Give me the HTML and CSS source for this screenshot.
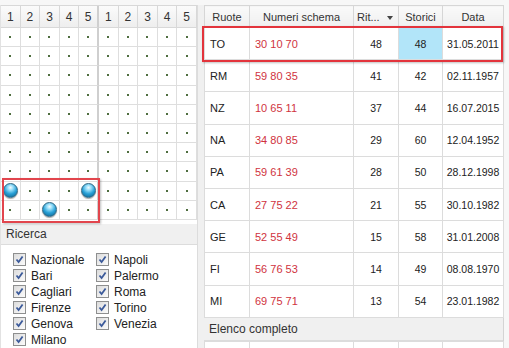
FILE: index.html
```html
<!DOCTYPE html>
<html lang="it">
<head>
    <meta charset="UTF-8">
    <title>Schemi ritardatari</title>
    <link rel="stylesheet" href="styles.css">
</head>
<body>

<div class="app">
    <!-- pannello sinistro: schedina + ricerca -->
    <div class="left">
        <div class="board" id="board"></div>
        <div class="pick-box"></div>

        <div class="bar">Ricerca</div>
        <div class="checks">
            <label class="chk"><span class="cb"><svg viewBox="0 0 9 9"><path d="M1.5 4.5 L3.6 7 L7.6 1.5"/></svg></span>Nazionale</label>
            <label class="chk"><span class="cb"><svg viewBox="0 0 9 9"><path d="M1.5 4.5 L3.6 7 L7.6 1.5"/></svg></span>Napoli</label>
            <label class="chk"><span class="cb"><svg viewBox="0 0 9 9"><path d="M1.5 4.5 L3.6 7 L7.6 1.5"/></svg></span>Bari</label>
            <label class="chk"><span class="cb"><svg viewBox="0 0 9 9"><path d="M1.5 4.5 L3.6 7 L7.6 1.5"/></svg></span>Palermo</label>
            <label class="chk"><span class="cb"><svg viewBox="0 0 9 9"><path d="M1.5 4.5 L3.6 7 L7.6 1.5"/></svg></span>Cagliari</label>
            <label class="chk"><span class="cb"><svg viewBox="0 0 9 9"><path d="M1.5 4.5 L3.6 7 L7.6 1.5"/></svg></span>Roma</label>
            <label class="chk"><span class="cb"><svg viewBox="0 0 9 9"><path d="M1.5 4.5 L3.6 7 L7.6 1.5"/></svg></span>Firenze</label>
            <label class="chk"><span class="cb"><svg viewBox="0 0 9 9"><path d="M1.5 4.5 L3.6 7 L7.6 1.5"/></svg></span>Torino</label>
            <label class="chk"><span class="cb"><svg viewBox="0 0 9 9"><path d="M1.5 4.5 L3.6 7 L7.6 1.5"/></svg></span>Genova</label>
            <label class="chk"><span class="cb"><svg viewBox="0 0 9 9"><path d="M1.5 4.5 L3.6 7 L7.6 1.5"/></svg></span>Venezia</label>
            <label class="chk"><span class="cb"><svg viewBox="0 0 9 9"><path d="M1.5 4.5 L3.6 7 L7.6 1.5"/></svg></span>Milano</label>
        </div>
    </div>

    <div class="splitter"></div>

    <!-- pannello destro: elenco schemi -->
    <div class="right">
        <table class="schemi">
            <colgroup>
                <col class="c-ruota"><col class="c-num"><col class="c-rit"><col class="c-sto"><col class="c-data">
            </colgroup>
            <thead>
                <tr>
                    <th>Ruote</th>
                    <th>Numeri schema</th>
                    <th class="sorted">Rit... <span class="arrow"></span></th>
                    <th>Storici</th>
                    <th>Data</th>
                </tr>
            </thead>
            <tbody id="rows"></tbody>
        </table>
        <div class="row-box"></div>

        <div class="bar">Elenco completo</div>
        <table class="schemi stub">
            <colgroup>
                <col class="c-ruota"><col class="c-num"><col class="c-rit"><col class="c-sto"><col class="c-data">
            </colgroup>
            <tr><td></td><td></td><td></td><td></td><td></td></tr>
        </table>
    </div>
</div>

<script>
// schedina 2 x (5 colonne), 10 righe
const board = document.getElementById('board');
const marbles = ['8-0', '8-4', '9-2'];

for (let c = 0; c < 10; c++) {
    const h = document.createElement('div');
    h.className = 'hd' + (c === 4 ? ' sep' : '');
    h.innerText = (c % 5) + 1;
    board.appendChild(h);
}
for (let r = 0; r < 10; r++) {
    for (let c = 0; c < 10; c++) {
        const cell = document.createElement('div');
        cell.className = 'cell' + (c === 4 ? ' sep' : '');
        const mark = document.createElement('span');
        mark.className = marbles.includes(r + '-' + c) ? 'marble' : 'dot';
        cell.appendChild(mark);
        board.appendChild(cell);
    }
}

// dati schemi
const data = [
    ['TO', '30 10 70', 48, 48, '31.05.2011'],
    ['RM', '59 80 35', 41, 42, '02.11.1957'],
    ['NZ', '10 65 11', 37, 44, '16.07.2015'],
    ['NA', '34 80 85', 29, 60, '12.04.1952'],
    ['PA', '59 61 39', 28, 50, '28.12.1998'],
    ['CA', '27 75 22', 21, 55, '30.10.1982'],
    ['GE', '52 55 49', 15, 58, '31.01.2008'],
    ['FI', '56 76 53', 14, 49, '08.08.1970'],
    ['MI', '69 75 71', 13, 54, '23.01.1982']
];
const tbody = document.getElementById('rows');
data.forEach(function(d, i) {
    const tr = document.createElement('tr');
    tr.innerHTML =
        '<td class="ruota">' + d[0] + '</td>' +
        '<td class="num">' + d[1] + '</td>' +
        '<td class="mid">' + d[2] + '</td>' +
        '<td class="mid' + (i === 0 ? ' hl' : '') + '">' + d[3] + '</td>' +
        '<td class="mid">' + d[4] + '</td>';
    tbody.appendChild(tr);
});
</script>

</body>
</html>
```

FILE: styles.css
```css
* {
    margin: 0;
    padding: 0;
    box-sizing: border-box;
}
body {
    font-family: "Liberation Sans", Arial, sans-serif;
    font-size: 11px;
    color: #222;
    background-color: #f7f7f7;
}
.app {
    display: flex;
    height: 348px;
    padding-top: 5px;
    overflow: hidden;
}

/* pannello sinistro */
.left {
    position: relative;
    width: 197px;
    display: flex;
    flex-direction: column;
    background-color: #fff;
    border-left: 1px solid #e2e2e2;
}
.board {
    display: grid;
    grid-template-columns: repeat(10, 1fr);
    grid-template-rows: 22px repeat(10, 19.2px);
    border-top: 1px solid #d8d8d8;
}
.hd {
    display: flex;
    align-items: center;
    justify-content: center;
    font-size: 12px;
    color: #333;
    background: linear-gradient(#fbfbfb, #eeeeee);
    border-right: 1px solid #d8d8d8;
    border-bottom: 1px solid #d8d8d8;
}
.cell {
    display: flex;
    align-items: center;
    justify-content: center;
    border-right: 1px solid #dedede;
    border-bottom: 1px solid #dedede;
}
.hd.sep, .cell.sep {
    border-right: 2px solid #cfcfcf;
}
.dot {
    width: 2px;
    height: 2px;
    background-color: #4f6e3f;
}
.marble {
    width: 15px;
    height: 15px;
    border-radius: 50%;
    border: 1px solid #2f6783;
    background: radial-gradient(circle at 50% 28%, #f2fbff 0, #9be0fa 22%, #28a0d6 55%, #0b5b86 100%);
    box-shadow: 0 1px 1px rgba(0, 0, 0, 0.35);
}
.pick-box {
    position: absolute;
    left: 1px;
    top: 173px;
    width: 98px;
    height: 45px;
    border: 2px solid #e2454d;
    box-shadow: 1px 1px 2px rgba(0, 0, 0, 0.25);
}

.bar {
    height: 21px;
    margin-top: 4px;
    padding-left: 5px;
    line-height: 20px;
    font-size: 12px;
    color: #333;
    background-color: #f0f0f0;
    border-bottom: 1px solid #dcdcdc;
}
.checks {
    display: grid;
    grid-template-columns: 83px 1fr;
    grid-auto-rows: 16px;
    padding: 7px 0 0 12px;
}
.chk {
    display: flex;
    align-items: center;
    font-size: 12px;
    color: #222;
}
.cb {
    width: 13px;
    height: 13px;
    margin-right: 5px;
    border: 1px solid #8e8f8f;
    background: linear-gradient(135deg, #dcdcdc, #fbfbfb);
    display: flex;
    align-items: center;
    justify-content: center;
}
.cb svg {
    width: 9px;
    height: 9px;
    fill: none;
    stroke: #3b5a9a;
    stroke-width: 1.8;
}

/* separatore */
.splitter {
    width: 7px;
    background-color: #f0f0f0;
    border-left: 1px solid #dcdcdc;
}

/* pannello destro */
.right {
    position: relative;
    width: 300px;
    display: flex;
    flex-direction: column;
    background-color: #fff;
    border-right: 1px solid #d4d4d4;
}
.schemi {
    width: 299px;
    border-collapse: collapse;
    table-layout: fixed;
}
.c-ruota { width: 45px; }
.c-num { width: 104px; }
.c-rit { width: 45px; }
.c-sto { width: 44px; }
.c-data { width: 61px; }
.schemi th {
    height: 22px;
    font-weight: normal;
    font-size: 11px;
    color: #333;
    white-space: nowrap;
    overflow: hidden;
    background: linear-gradient(#fafafa, #efefef);
    border: 1px solid #d6d6d6;
}
.schemi th.sorted {
    text-align: left;
    padding-left: 3px;
}
.arrow {
    display: inline-block;
    margin-left: 4px;
    width: 0;
    height: 0;
    border-left: 3.5px solid transparent;
    border-right: 3.5px solid transparent;
    border-top: 4px solid #444;
    vertical-align: middle;
}
.schemi td {
    height: 32.2px;
    border: 1px solid #dcdcdc;
    color: #222;
}
.schemi td.ruota {
    padding-left: 5px;
}
.schemi td.num {
    padding-left: 5px;
    color: #d0333e;
}
.schemi td.mid {
    text-align: center;
    font-size: 10.5px;
}
.schemi td.hl {
    background-color: #b2e5f9;
}
.row-box {
    position: absolute;
    left: -2px;
    top: 21px;
    width: 301px;
    height: 36px;
    border: 2px solid #e3343c;
    box-shadow: 1px 1px 2px rgba(0, 0, 0, 0.25);
}
.right .bar {
    margin-top: 0;
    height: 23px;
    line-height: 22px;
}
.schemi.stub td {
    height: 10px;
}
```
